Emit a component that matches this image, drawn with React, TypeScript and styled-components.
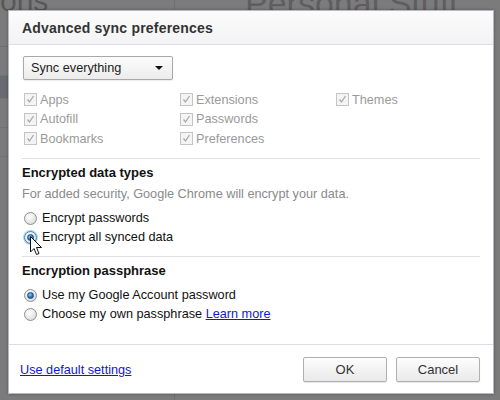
import React from "react";
import styled, { createGlobalStyle } from "styled-components";

const Global = createGlobalStyle`
  html, body { margin: 0; padding: 0; }
  body { width: 500px; height: 400px; overflow: hidden; background: #777; font-family: "Liberation Sans", Arial, sans-serif; }
`;

const FS = "12.7px";

const Page = styled.div`
  position: relative;
  width: 500px;
  height: 400px;
  background: #7b7b7b;
  overflow: hidden;
`;

const BgLayout = styled.div`
  display: grid;
  grid-template-columns: 175px 1fr;
  height: 100%;
  color: #5a5a5a;
`;

const BgSide = styled.div`
  display: flex;
  flex-direction: column;
  border-right: 1px solid #6e6e6e;
`;

const BgLogo = styled.div`
  font-size: 30px;
  line-height: 30px;
  margin-top: -14px;
  color: #585858;
  height: 60px;
  border-bottom: 1px solid #6f6f6f;
`;

const BgBar = styled.div<{ $sel?: boolean }>`
  height: 22px;
  background: ${(p) => (p.$sel ? "#6a6a72" : "transparent")};
  margin-top: ${(p) => (p.$sel ? "0" : "6px")};
  border-bottom: 1px solid #747474;
`;

const BgMain = styled.div`
  padding-left: 70px;
`;

const BgTitle = styled.div`
  font-size: 34px;
  line-height: 30px;
  margin-top: -12px;
  color: #5e5e5e;
`;

const Dialog = styled.div`
  position: absolute;
  left: 8px;
  top: 10px;
  width: 484px;
  height: 382px;
  background: #fff;
  border: 1px solid #b8b8c4;
  display: flex;
  flex-direction: column;
  box-shadow: 0 0 3px rgba(0, 0, 0, 0.3);
`;

const Header = styled.div`
  height: 33px;
  background: linear-gradient(#fbfbfb, #f3f3f5);
  border-bottom: 1px solid #dcdce8;
  display: flex;
  align-items: center;
  padding-left: 13px;
  box-sizing: content-box;
`;

const Title = styled.h1`
  margin: 0;
  font-size: 14px;
  font-weight: bold;
  color: #333;
  letter-spacing: 0.2px;
`;

const Body = styled.div`
  flex: 1;
  padding: 0 13px;
  display: flex;
  flex-direction: column;
  font-size: ${FS};
`;

const Select = styled.div`
  margin-top: 11px;
  margin-left: 1px;
  width: 150px;
  height: 24px;
  box-sizing: border-box;
  border: 1px solid #a8a8a8;
  border-radius: 2px;
  background: linear-gradient(#fcfcfc, #ececec);
  display: flex;
  align-items: center;
  justify-content: space-between;
  padding: 0 8px 0 7px;
  color: #222;
  font-size: ${FS};
  box-shadow: 0 1px 1px rgba(0,0,0,0.08);
`;

const Arrow = styled.span`
  width: 0;
  height: 0;
  border-left: 4px solid transparent;
  border-right: 4px solid transparent;
  border-top: 4px solid #111;
  margin-right: 1px;
`;

const CheckGrid = styled.div`
  margin-top: 10px;
  display: grid;
  grid-template-columns: 156px 156px 156px;
  grid-auto-rows: 19.5px;
  margin-left: 2px;
`;

const CheckItem = styled.label`
  display: flex;
  align-items: center;
  gap: 3px;
  color: #9a9a9a;
  font-size: ${FS};
`;

const Box = styled.span`
  width: 11px;
  height: 11px;
  border: 1px solid #c4c4c4;
  background: #f4f4f4;
  display: inline-flex;
  align-items: center;
  justify-content: center;
`;

const Sep = styled.hr`
  margin: 9px 0 0;
  border: 0;
  border-top: 1px solid #e0e0e6;
  height: 0;
`;

const Heading = styled.div`
  margin-top: 5px;
  line-height: 18px;
  font-weight: bold;
  font-size: 13px;
  color: #111;
`;

const Desc = styled.div`
  margin-top: 3px;
  line-height: 18px;
  color: #8a8a8a;
  font-size: ${FS};
`;

const RadioList = styled.div<{ $mt: number }>`
  margin-top: ${(p) => p.$mt}px;
  display: flex;
  flex-direction: column;
`;

const RadioRow = styled.label`
  height: 19px;
  display: flex;
  align-items: center;
  gap: 5px;
  padding-left: 2px;
  color: #111;
  font-size: ${FS};
`;

const Radio = styled.span<{ $on?: boolean; $focus?: boolean }>`
  width: 11px;
  height: 11px;
  border-radius: 50%;
  border: 1px solid ${(p) => (p.$focus ? "#3c7fb1" : "#8e8f8f")};
  background: radial-gradient(circle at 40% 35%, #ffffff 0%, #e4e4e4 60%, #c8c8c8 100%);
  display: inline-flex;
  align-items: center;
  justify-content: center;
  box-shadow: ${(p) => (p.$focus ? "0 0 0 1px #a9d6f5" : "none")};
  &::after {
    content: "";
    display: ${(p) => (p.$on ? "block" : "none")};
    width: 5px;
    height: 5px;
    border-radius: 50%;
    background: radial-gradient(circle at 40% 35%, #8fd0ff 0%, #1a6fc0 60%, #0b3f78 100%);
    border: 0.5px solid #1b4d80;
  }
`;

const Link = styled.a`
  color: #1515d6;
  text-decoration: underline;
  cursor: pointer;
`;

const Footer = styled.div`
  border-top: 1px solid #dcdce8;
  height: 49px;
  box-sizing: border-box;
  display: flex;
  align-items: center;
  justify-content: space-between;
  padding: 1px 13px 0 11px;
  font-size: ${FS};
`;

const Buttons = styled.div`
  display: flex;
  gap: 9px;
`;

const Button = styled.button`
  width: 84px;
  height: 25px;
  border: 1px solid #b0b0b0;
  border-radius: 2px;
  background: linear-gradient(#fdfdfd, #e9e9e9);
  font-family: "Liberation Sans", Arial, sans-serif;
  font-size: 13px;
  color: #333;
  padding: 0;
  box-shadow: 0 1px 1px rgba(0, 0, 0, 0.1);
`;

const Cursor = styled.svg`
  position: absolute;
  left: 30px;
  top: 236px;
`;

const Check = () => (
  <svg width="9" height="9" viewBox="0 0 9 9">
    <path d="M1.5 4.5 L3.5 7 L7.5 1" fill="none" stroke="#a9a9a9" strokeWidth="1.3" />
  </svg>
);

const checks = [
  ["Apps", "Extensions", "Themes"],
  ["Autofill", "Passwords", ""],
  ["Bookmarks", "Preferences", ""],
];

export default function App() {
  return (
    <Page>
      <Global />
      <BgLayout>
        <BgSide>
          <BgLogo>ons</BgLogo>
          <BgBar />
          <BgBar $sel />
          <BgBar />
          <BgBar />
        </BgSide>
        <BgMain>
          <BgTitle>Personal Stuff</BgTitle>
        </BgMain>
      </BgLayout>
      <Dialog>
        <Header>
          <Title>Advanced sync preferences</Title>
        </Header>
        <Body>
          <Select>
            <span>Sync everything</span>
            <Arrow />
          </Select>
          <CheckGrid>
            {checks.flat().map((c, i) =>
              c ? (
                <CheckItem key={i}>
                  <Box>
                    <Check />
                  </Box>
                  {c}
                </CheckItem>
              ) : (
                <span key={i} />
              )
            )}
          </CheckGrid>
          <Sep />
          <Heading>Encrypted data types</Heading>
          <Desc>For added security, Google Chrome will encrypt your data.</Desc>
          <RadioList $mt={6}>
            <RadioRow>
              <Radio />
              Encrypt passwords
            </RadioRow>
            <RadioRow>
              <Radio $on $focus />
              Encrypt all synced data
            </RadioRow>
          </RadioList>
          <Sep />
          <Heading>Encryption passphrase</Heading>
          <RadioList $mt={6}>
            <RadioRow>
              <Radio $on />
              Use my Google Account password
            </RadioRow>
            <RadioRow>
              <Radio />
              <span>
                Choose my own passphrase <Link>Learn more</Link>
              </span>
            </RadioRow>
          </RadioList>
        </Body>
        <Footer>
          <Link>Use default settings</Link>
          <Buttons>
            <Button>OK</Button>
            <Button>Cancel</Button>
          </Buttons>
        </Footer>
      </Dialog>
      <Cursor width="13" height="21" viewBox="0 0 13 21">
        <path d="M0.5 0.5 L0.5 16 L4 12.5 L6.5 18.5 L9 17.5 L6.5 11.5 L11.5 11.5 Z" fill="#fff" stroke="#111" strokeWidth="1" />
      </Cursor>
    </Page>
  );
}
